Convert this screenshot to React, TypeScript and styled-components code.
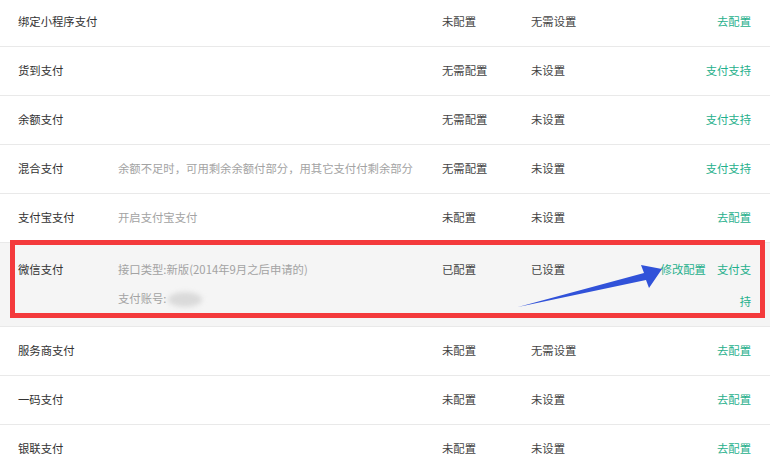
import React from "react";
import styled, { createGlobalStyle } from "styled-components";

const Global = createGlobalStyle`
  html, body { margin: 0; padding: 0; background: #ffffff; }
  body {
    font-family: "Noto Sans CJK SC", "Noto Sans", sans-serif;
    font-size: 11.35px;
    color: #333333;
    width: 770px;
    height: 463px;
    overflow: hidden;
  }
`;

const Page = styled.div`
  position: relative;
  width: 770px;
  height: 463px;
  overflow: hidden;
`;

const List = styled.div`
  display: flex;
  flex-direction: column;
`;

const Row = styled.div<{ $multi?: boolean }>`
  position: relative;
  display: grid;
  grid-template-columns: 100px 324px 89px 1fr 92px;
  align-items: start;
  padding: ${(p) => (p.$multi ? "10px 19px 9px 18px" : "14px 19px 16px 18px")};
  border-bottom: 1px solid #e9e9e9;
  background: ${(p) => (p.$multi ? "#f5f5f5" : "#ffffff")};
  line-height: ${(p) => (p.$multi ? "32px" : "18px")};
  &:first-child { padding-top: 12px; }
`;

const Name = styled.div`
  color: #333333;
  white-space: nowrap;
`;

const Desc = styled.div<{ $multi?: boolean }>`
  color: #a3a3a3;
  white-space: nowrap;
  ${(p) => (p.$multi ? "padding-top: 2px; line-height: 29px;" : "")}
`;

const Status = styled.div`
  color: #444444;
  white-space: nowrap;
`;

const Actions = styled.div`
  text-align: right;
`;

const Link = styled.a`
  color: #1fb08c;
  text-decoration: none;
  cursor: pointer;
  & + & { margin-left: 11px; }
`;

const Blur = styled.span`
  display: inline-block;
  width: 34px;
  height: 15px;
  margin-left: 1px;
  vertical-align: middle;
  border-radius: 50%;
  background: #dadada;
  filter: blur(2.5px);
`;

const Highlight = styled.div`
  position: absolute;
  left: 10px;
  right: 5px;
  top: -3px;
  height: 78px;
  box-sizing: border-box;
  border: 5px solid #f43a3c;
  pointer-events: none;
`;

const Overlay = styled.svg`
  position: absolute;
  left: 0;
  top: 0;
  pointer-events: none;
`;

type Item = {
  name: string;
  desc?: string;
  s1: string;
  s2: string;
  actions: string[];
};

const items: Item[] = [
  { name: "绑定小程序支付", s1: "未配置", s2: "无需设置", actions: ["去配置"] },
  { name: "货到支付", s1: "无需配置", s2: "未设置", actions: ["支付支持"] },
  { name: "余额支付", s1: "无需配置", s2: "未设置", actions: ["支付支持"] },
  {
    name: "混合支付",
    desc: "余额不足时，可用剩余余额付部分，用其它支付付剩余部分",
    s1: "无需配置",
    s2: "未设置",
    actions: ["支付支持"],
  },
  { name: "支付宝支付", desc: "开启支付宝支付", s1: "未配置", s2: "未设置", actions: ["去配置"] },
];

const after: Item[] = [
  { name: "服务商支付", s1: "未配置", s2: "无需设置", actions: ["去配置"] },
  { name: "一码支付", s1: "未配置", s2: "未设置", actions: ["去配置"] },
  { name: "银联支付", s1: "未配置", s2: "未设置", actions: ["去配置"] },
];

const PlainRow = ({ item }: { item: Item }) => (
  <Row>
    <Name>{item.name}</Name>
    <Desc>{item.desc ?? ""}</Desc>
    <Status>{item.s1}</Status>
    <Status>{item.s2}</Status>
    <Actions>
      {item.actions.map((a) => (
        <Link key={a}>{a}</Link>
      ))}
    </Actions>
  </Row>
);

export default function App() {
  return (
    <>
      <Global />
      <Page>
        <List>
          {items.map((it) => (
            <PlainRow key={it.name} item={it} />
          ))}
          <Row $multi>
            <Name>微信支付</Name>
            <Desc $multi>
              <div>接口类型:新版(2014年9月之后申请的)</div>
              <div>
                支付账号:
                <Blur />
              </div>
            </Desc>
            <Status>已配置</Status>
            <Status>已设置</Status>
            <Actions>
              <Link>修改配置</Link>
              <Link>支付支持</Link>
            </Actions>
            <Highlight />
          </Row>
          {after.map((it) => (
            <PlainRow key={it.name} item={it} />
          ))}
        </List>
        <Overlay width="770" height="463" viewBox="0 0 770 463">
          <polygon
            points="518,307 644,273 641,265 662,269 649,288 646,280"
            fill="#3152d9"
          />
        </Overlay>
      </Page>
    </>
  );
}
